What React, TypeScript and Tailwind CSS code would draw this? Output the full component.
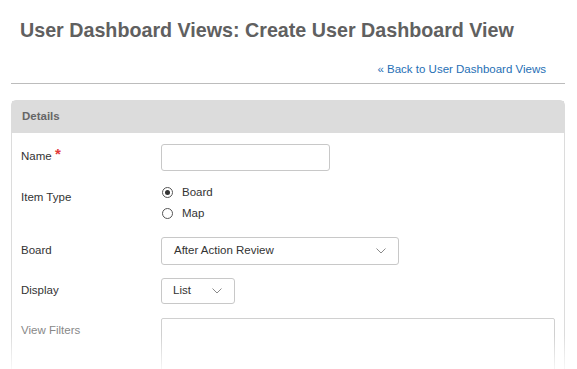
function Chevron() {
  return (
    <svg width="10" height="6" viewBox="0 0 10 6" className="shrink-0">
      <path d="M0.5 0.5 L5 5 L9.5 0.5" fill="none" stroke="#8a8a8a" strokeWidth="1" />
    </svg>
  );
}

function Radio({ checked, label }: { checked?: boolean; label: string }) {
  return (
    <label className="flex h-[21px] items-center">
      <span className="ml-[1px] flex h-[11px] w-[11px] items-center justify-center rounded-full border border-[#555] bg-white">
        {checked && <span className="h-[5px] w-[5px] rounded-full bg-[#333]" />}
      </span>
      <span className="ml-[9px] text-[11.5px] text-[#333]">{label}</span>
    </label>
  );
}

export default function App() {
  return (
    <div className="relative h-[369px] w-[577px] overflow-hidden bg-white font-['Liberation_Sans',Arial,sans-serif]">
      <h1 className="pl-[20px] pt-[18px] text-[19.7px] font-bold leading-[24px] text-[#606060]">
        User Dashboard Views: Create User Dashboard View
      </h1>

      <div className="ml-[11px] mr-[12px] mt-[20px] flex justify-end border-b border-[#bcbcbc] pb-[7px] pr-[19px]">
        <a href="#" className="text-[11.5px] leading-[14px] text-[#1f6fb5]">
          « Back to User Dashboard Views
        </a>
      </div>

      <div className="ml-[11px] mr-[12px] mt-[16px] rounded-t-[5px] border border-[#dcdcdc]">
        <div className="flex h-[32px] items-center bg-[#dcdcdc] pl-[10px] text-[11.5px] font-bold text-[#666]">
          Details
        </div>

        <div className="px-[9px] pt-[11px]">
          <div className="flex">
            <div className="w-[140px] pt-[5px] text-[11.5px] leading-[14px] text-[#333]">
              Name <span className="align-top text-[15px] font-bold leading-[10px] text-[#e23b3b]">*</span>
            </div>
            <input className="h-[27px] w-[169px] rounded-[3px] border border-[#c8c8c8] px-2 text-[11px] outline-none" />
          </div>

          <div className="mt-[11px] flex">
            <div className="w-[140px] pt-[8px] text-[11.5px] leading-[14px] text-[#333]">Item Type</div>
            <div className="flex flex-col">
              <Radio checked label="Board" />
              <Radio label="Map" />
            </div>
          </div>

          <div className="mt-[13px] flex">
            <div className="w-[140px] pt-[6px] text-[11.5px] leading-[14px] text-[#333]">Board</div>
            <div className="flex h-[28px] w-[238px] items-center justify-between rounded-[3px] border border-[#c8c8c8] pl-[12px] pr-[12px] text-[11.5px] text-[#333]">
              <span>After Action Review</span>
              <Chevron />
            </div>
          </div>

          <div className="mt-[13px] flex">
            <div className="w-[140px] pt-[5px] text-[11.5px] leading-[14px] text-[#333]">Display</div>
            <div className="flex h-[26px] w-[74px] items-center justify-between rounded-[3px] border border-[#c8c8c8] pl-[11px] pr-[12px] text-[11.5px] text-[#333]">
              <span>List</span>
              <Chevron />
            </div>
          </div>

          <div className="mt-[14px] flex">
            <div className="w-[140px] pt-[5px] text-[11.5px] leading-[14px] text-[#888]">View Filters</div>
            <textarea className="h-[80px] w-[394px] resize-none rounded-[2px] border border-[#d0d0d0] outline-none" />
          </div>
        </div>
      </div>

      <div className="pointer-events-none absolute bottom-0 left-0 h-[34px] w-full bg-gradient-to-b from-white/0 to-white/80" />
    </div>
  );
}
